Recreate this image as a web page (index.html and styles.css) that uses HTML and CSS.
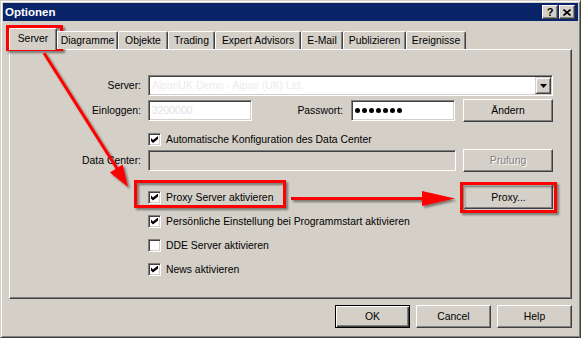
FILE: index.html
```html
<!DOCTYPE html>
<html>
<head>
<meta charset="utf-8">
<link rel="stylesheet" href="styles.css">
</head>
<body>
<div class="window">
  <div class="titlebar">
    <span class="title">Optionen</span>
    <div class="tbtns">
      <span class="tbtn">?</span>
      <span class="tbtn"><svg width="8" height="7" viewBox="0 0 8 7"><path d="M0.5 0.5 L7.5 6.5 M7.5 0.5 L0.5 6.5" stroke="#000" stroke-width="1.6"/></svg></span>
    </div>
  </div>
  <div class="client">
    <div class="tabs">
      <div class="tab sel t-server">Server</div>
      <div class="tab t-diag">Diagramme</div>
      <div class="tab t-obj">Objekte</div>
      <div class="tab t-trad">Trading</div>
      <div class="tab t-ea">Expert Advisors</div>
      <div class="tab t-mail">E-Mail</div>
      <div class="tab t-pub">Publizieren</div>
      <div class="tab t-ev">Ereignisse</div>
    </div>
    <div class="panel">
      <div class="row r1">
        <span class="lbl">Server:</span>
        <div class="sunken combo">
          <span class="combo-text">AlpariUK Demo - Alpari (UK) Ltd.</span>
          <span class="raised dd"><svg width="7" height="4" viewBox="0 0 7 4"><path d="M0 0 H7 L3.5 4 Z" fill="#000"/></svg></span>
        </div>
      </div>
      <div class="row r2">
        <span class="lbl">Einloggen:</span>
        <div class="sunken field w104"><span class="faint">3200000</span></div>
        <span class="lbl2">Passwort:</span>
        <div class="sunken field w104 pw"><i></i><i></i><i></i><i></i><i></i><i></i><i></i></div>
        <button class="btn w90 ml8">Ändern</button>
      </div>
      <div class="row r3">
        <span class="pad"></span>
        <span class="cb on"></span>
        <span class="cbl">Automatische Konfiguration des Data Center</span>
      </div>
      <div class="row r4">
        <span class="lbl">Data Center:</span>
        <div class="sunken field disabled w308"></div>
        <button class="btn w90 ml7 dis">Prufung</button>
      </div>
      <div class="row r5">
        <span class="pad"></span>
        <span class="cb on"></span>
        <span class="cbl">Proxy Server aktivieren</span>
        <button class="btn proxy-btn">Proxy...</button>
      </div>
      <div class="row rc">
        <span class="pad"></span>
        <span class="cb on"></span>
        <span class="cbl">Persönliche Einstellung bei Programmstart aktivieren</span>
      </div>
      <div class="row rc">
        <span class="pad"></span>
        <span class="cb"></span>
        <span class="cbl">DDE Server aktivieren</span>
      </div>
      <div class="row rc">
        <span class="pad"></span>
        <span class="cb on"></span>
        <span class="cbl">News aktivieren</span>
      </div>
    </div>
    <div class="footer">
      <button class="btn fb def">OK</button>
      <button class="btn fb">Cancel</button>
      <button class="btn fb">Help</button>
    </div>
  </div>
</div>
<svg class="annot" width="581" height="338" viewBox="0 0 581 338">
  <defs>
    <filter id="sh" x="-5%" y="-5%" width="115%" height="115%">
      <feDropShadow dx="2" dy="2" stdDeviation="1" flood-color="#000" flood-opacity="0.45"/>
    </filter>
  </defs>
  <g filter="url(#sh)">
    <g fill="none" stroke="#ff0000" stroke-width="3">
      <rect x="7.5" y="26.5" width="54" height="23"/>
      <rect x="135.5" y="181.5" width="149" height="25"/>
      <rect x="461.5" y="183.5" width="94" height="28"/>
      <line x1="44" y1="53" x2="118" y2="170"/>
      <line x1="291" y1="198.5" x2="428" y2="198.5"/>
    </g>
    <g fill="#ff0000">
      <polygon points="128,187 109.9,172.4 122.7,164.4"/>
      <polygon points="422,191 455,198.5 422,206"/>
    </g>
  </g>
</svg>
</body>
</html>
```

FILE: styles.css
```css
body {
  margin: 0;
  width: 581px;
  height: 338px;
  overflow: hidden;
  position: relative;
  background: #d4d0c8;
  font-family: "Liberation Sans", Arial, sans-serif;
  font-size: 10.4px;
  color: #000;
}

.window {
  width: 581px;
  height: 338px;
  box-sizing: border-box;
  border: 1px solid;
  border-color: #d4d0c8 #404040 #404040 #d4d0c8;
  box-shadow: inset 1px 1px #fff, inset -1px -1px #808080;
  padding: 2px;
}

.titlebar {
  height: 18px;
  background: #0a246a;
  display: flex;
  align-items: center;
  padding: 0 3px 0 2px;
  color: #fff;
}

.title {
  flex: 1;
  font-weight: bold;
  font-size: 11.5px;
}

.tbtns {
  display: flex;
  gap: 1px;
}

.tbtn {
  width: 16px;
  height: 14px;
  box-sizing: border-box;
  background: #d4d0c8;
  border: 1px solid;
  border-color: #fff #404040 #404040 #fff;
  box-shadow: inset -1px -1px #808080;
  display: flex;
  align-items: center;
  justify-content: center;
  color: #000;
  font-weight: bold;
  font-size: 11px;
  line-height: 1;
}

.client {
  padding: 7px 6px 0 6px;
}

.tabs {
  display: flex;
  align-items: flex-end;
  height: 21px;
  padding-left: 2px;
  position: relative;
  z-index: 1;
}

.tab {
  height: 18px;
  box-sizing: border-box;
  border-top: 1px solid #fff;
  border-left: 1px solid #fff;
  border-right: 1px solid #404040;
  box-shadow: inset -1px 0 #808080;
  border-radius: 2px 2px 0 0;
  background: #d4d0c8;
  display: flex;
  align-items: center;
  justify-content: center;
  padding-bottom: 1px;
  white-space: nowrap;
}

.tab.sel {
  height: 22px;
  margin: 0 0 -1px -2px;
  padding-bottom: 3px;
}

.t-server { width: 48px; }
.t-diag { width: 61px; }
.t-obj { width: 50px; }
.t-trad { width: 47px; }
.t-ea { width: 86px; }
.t-mail { width: 42px; }
.t-pub { width: 63px; }
.t-ev { width: 60px; }

.panel {
  height: 250px;
  box-sizing: border-box;
  border: 1px solid;
  border-color: #fff #404040 #404040 #fff;
  box-shadow: inset -1px -1px #808080;
  padding: 25px 18px 0 0;
}

.row {
  display: flex;
  align-items: center;
}

.r1 { height: 21px; }
.r2 { height: 23px; margin-top: 3px; }
.r3 { height: 17px; margin-top: 9px; }
.r4 { height: 23px; margin-top: 1px; }
.r5 { height: 24px; margin-top: 13px; }
.rc { height: 24px; }

.lbl {
  flex: none;
  width: 131px;
  margin-right: 7px;
  text-align: right;
}

.lbl2 {
  flex: none;
  width: 91px;
  margin-right: 8px;
  text-align: right;
}

.pad {
  flex: none;
  width: 138px;
}

.sunken {
  box-sizing: border-box;
  border: 1px solid;
  border-color: #808080 #fff #fff #808080;
  box-shadow: inset 1px 1px #404040, inset -1px -1px #d4d0c8;
  background: #fff;
}

.raised {
  box-sizing: border-box;
  background: #d4d0c8;
  border: 1px solid;
  border-color: #d4d0c8 #404040 #404040 #d4d0c8;
  box-shadow: inset 1px 1px #fff, inset -1px -1px #808080;
}

.combo {
  flex: 1;
  height: 21px;
  padding: 1px;
  display: flex;
  align-items: center;
}

.combo-text {
  flex: 1;
  padding-left: 2px;
  color: #ececec;
  white-space: nowrap;
}

.dd {
  width: 16px;
  height: 17px;
  display: flex;
  align-items: center;
  justify-content: center;
}

.field {
  height: 21px;
  padding: 1px 3px;
  display: flex;
  align-items: center;
  flex: none;
}

.faint {
  color: #e2e2e2;
}

.w104 { width: 104px; }
.w308 { width: 308px; }
.w90 { width: 90px; }
.ml8 { margin-left: 8px; }
.ml7 { margin-left: 7px; }

.disabled {
  background: #d4d0c8;
}

.pw {
  gap: 2px;
}

.pw i {
  display: block;
  width: 5px;
  height: 5px;
  border-radius: 50%;
  background: #000;
}

.btn {
  font: inherit;
  color: #000;
  height: 23px;
  box-sizing: border-box;
  padding: 0;
  background: #d4d0c8;
  border: 1px solid;
  border-color: #fff #404040 #404040 #fff;
  box-shadow: inset -1px -1px #808080;
  flex: none;
}

.dis {
  color: #808080;
  text-shadow: 1px 1px #fff;
}

.proxy-btn {
  margin-left: auto;
  width: 89px;
  height: 24px;
}

.cb {
  flex: none;
  width: 13px;
  height: 13px;
  box-sizing: border-box;
  border: 1px solid;
  border-color: #808080 #fff #fff #808080;
  box-shadow: inset 1px 1px #404040, inset -1px -1px #d4d0c8;
  background: #fff;
  position: relative;
}

.cb.on::after {
  content: "";
  position: absolute;
  left: 2px;
  top: 2px;
  width: 7px;
  height: 7px;
  background: #000;
  clip-path: polygon(0 28.6%, 28.6% 57.1%, 100% 0, 100% 42.9%, 28.6% 100%, 0 71.4%);
}

.cbl {
  margin-left: 5px;
  white-space: nowrap;
}

.footer {
  display: flex;
  justify-content: flex-end;
  gap: 6px;
  margin-top: 6px;
}

.fb {
  width: 75px;
}

.def {
  border: 1px solid #000;
  box-shadow: inset 1px 1px #fff, inset -1px -1px #404040, inset -2px -2px #808080;
}

.annot {
  position: absolute;
  left: 0;
  top: 0;
  pointer-events: none;
}
```
